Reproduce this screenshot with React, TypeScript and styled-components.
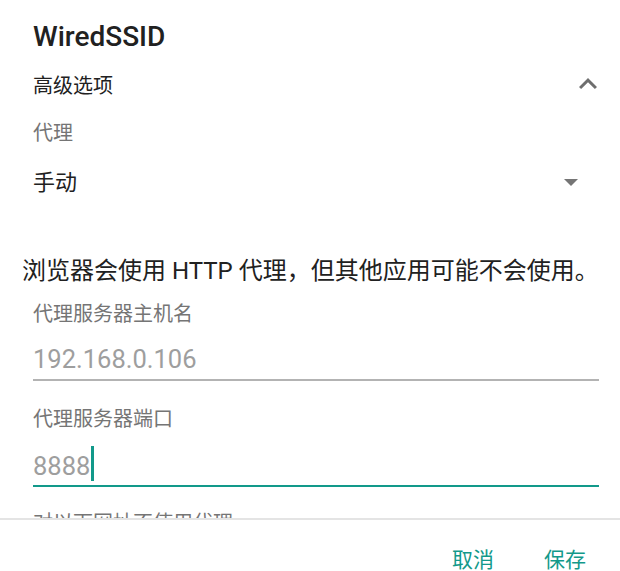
import React from "react";
import styled, { createGlobalStyle } from "styled-components";

const Global = createGlobalStyle`
  html, body { margin: 0; padding: 0; background: #ffffff; }
  body { font-family: Roboto, "Noto Sans CJK SC", sans-serif; color: #212121; }
  * { box-sizing: border-box; }
`;

const Dialog = styled.div`
  width: 620px;
  height: 571px;
  display: flex;
  flex-direction: column;
  overflow: hidden;
  background: #fff;
`;

const Body = styled.div`
  height: 518px;
  flex: none;
  overflow: hidden;
  padding: 20px 21px 0 22px;
  display: flex;
  flex-direction: column;
`;

const Title = styled.div`
  flex: none;
  padding-left: 11px;
  height: 34px;
  font-size: 28px;
  font-weight: 500;
  line-height: 34px;
  color: #212121;
`;

const Row = styled.div<{ $top: number }>`
  flex: none;
  margin-top: ${(p) => p.$top}px;
  padding-left: 11px;
  height: 40px;
  display: flex;
  align-items: center;
  justify-content: space-between;
`;

const RowText = styled.span<{ $size: number }>`
  font-size: ${(p) => p.$size}px;
  color: #212121;
`;

const IconBox = styled.span<{ $right: number; $down?: number }>`
  display: flex;
  align-items: center;
  justify-content: center;
  margin-right: ${(p) => p.$right}px;
  margin-top: ${(p) => (p.$down ?? 0) * 2}px;
`;

const Label = styled.div<{ $top: number }>`
  flex: none;
  margin-top: ${(p) => p.$top}px;
  padding-left: 11px;
  height: 24px;
  font-size: 20px;
  line-height: 24px;
  color: #757575;
  white-space: nowrap;
`;

const Description = styled.div`
  flex: none;
  margin-top: 55px;
  height: 32px;
  font-size: 24px;
  line-height: 32px;
  color: #212121;
  white-space: nowrap;
`;

const Field = styled.div<{ $focused?: boolean; $top: number; $pad: number }>`
  flex: none;
  margin-top: ${(p) => p.$top}px;
  margin-left: 11px;
  padding-bottom: ${(p) => p.$pad}px;
  border-bottom: 2px solid ${(p) => (p.$focused ? "#12998a" : "#b3b3b3")};
  display: flex;
  align-items: flex-end;
`;

const Value = styled.span`
  height: 30px;
  font-size: 25.5px;
  line-height: 30px;
  color: #9e9e9e;
`;

const Caret = styled.span`
  display: block;
  width: 3px;
  height: 35px;
  margin-left: 1px;
  background: #12998a;
`;

const Footer = styled.div`
  flex: none;
  border-top: 2px solid #e4e4e4;
  display: flex;
  justify-content: flex-end;
  gap: 50px;
  padding: 26px 34px 0 0;
`;

const Action = styled.button`
  border: none;
  background: none;
  padding: 0;
  font-family: inherit;
  font-size: 21px;
  line-height: 28px;
  height: 28px;
  color: #12998a;
`;

const ChevronUp = () => (
  <svg width="36" height="36" viewBox="0 0 24 24" fill="#6e6e6e">
    <path d="M12 8l-6 6 1.41 1.41L12 10.83l4.59 4.58L18 14z" />
  </svg>
);

const DropTriangle = () => (
  <svg width="14" height="7" viewBox="0 0 14 7" fill="#757575">
    <polygon points="0,0 14,0 7,7" />
  </svg>
);

export default function App() {
  return (
    <>
      <Global />
      <Dialog>
        <Body>
          <Title>WiredSSID</Title>
          <Row $top={10}>
            <RowText $size={20}>高级选项</RowText>
            <IconBox $right={-7}>
              <ChevronUp />
            </IconBox>
          </Row>
          <Label $top={17}>代理</Label>
          <Row $top={15}>
            <RowText $size={22}>手动</RowText>
            <IconBox $right={21} $down={2}>
              <DropTriangle />
            </IconBox>
          </Row>
          <Description>浏览器会使用 HTTP 代理，但其他应用可能不会使用。</Description>
          <Label $top={15}>代理服务器主机名</Label>
          <Field $top={18} $pad={5}>
            <Value>192.168.0.106</Value>
          </Field>
          <Label $top={26}>代理服务器端口</Label>
          <Field $top={15} $pad={4} $focused>
            <Value>8888</Value>
            <Caret />
          </Field>
          <Label $top={24}>对以下网址不使用代理</Label>
        </Body>
        <Footer>
          <Action>取消</Action>
          <Action>保存</Action>
        </Footer>
      </Dialog>
    </>
  );
}
